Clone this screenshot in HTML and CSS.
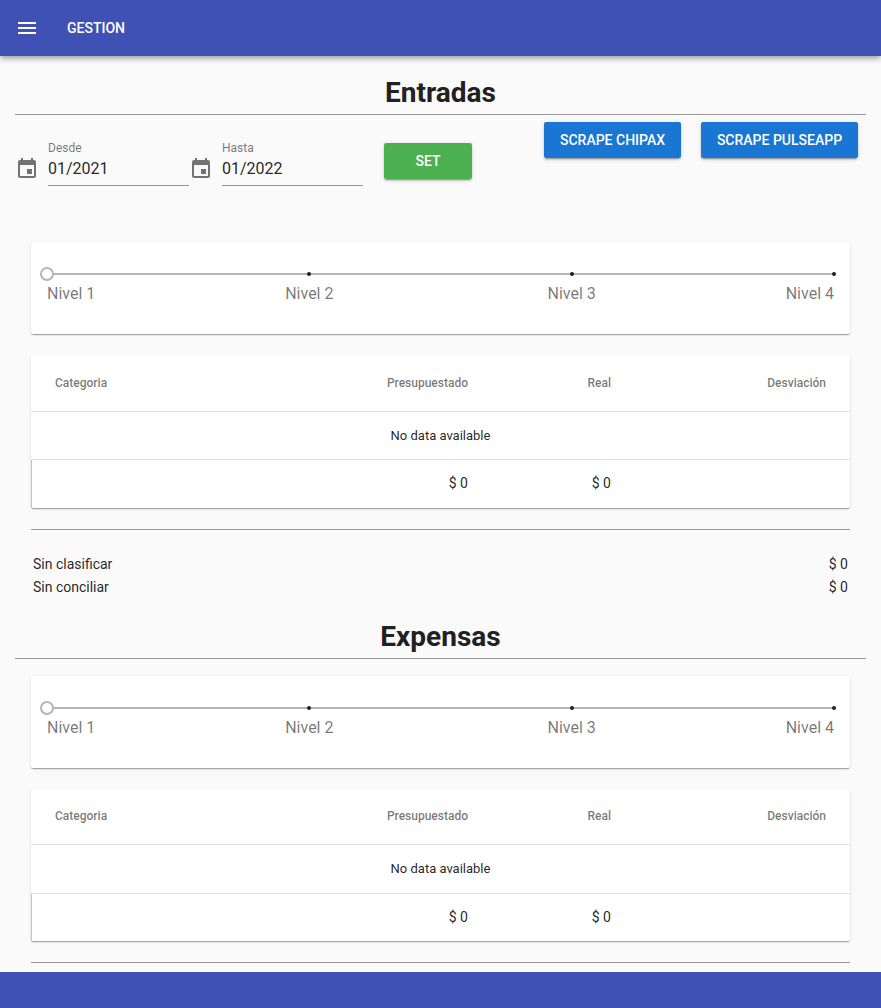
FILE: index.html
```html
<!DOCTYPE html>
<html lang="es">
<head>
    <meta charset="UTF-8">
    <meta name="viewport" content="width=device-width, initial-scale=1.0">
    <title>Gestion</title>
    <link rel="stylesheet" href="styles.css">
</head>
<body>
    <header class="toolbar">
        <svg class="menu-icon" viewBox="0 0 24 24"><path d="M3,6H21V8H3V6M3,11H21V13H3V11M3,16H21V18H3V16Z"/></svg>
        <div class="toolbar-title">GESTION</div>
    </header>
    <main class="page">
        <h2 class="title">Entradas</h2>
        <div class="filters">
            <svg class="date-icon" viewBox="0 0 24 24"><path d="M17,12h-5v5h5V12z M16,1v2H8V1H6v2H5C3.89,3 3.01,3.9 3.01,5L3,19c0,1.1 0.89,2 2,2h14c1.1,0 2-0.9 2-2V5c0-1.1-0.9-2-2-2h-1V1H16z M19,19H5V8h14V19z"/></svg>
            <div class="field">
                <label>Desde</label>
                <div class="field-value">01/2021</div>
            </div>
            <svg class="date-icon" viewBox="0 0 24 24"><path d="M17,12h-5v5h5V12z M16,1v2H8V1H6v2H5C3.89,3 3.01,3.9 3.01,5L3,19c0,1.1 0.89,2 2,2h14c1.1,0 2-0.9 2-2V5c0-1.1-0.9-2-2-2h-1V1H16z M19,19H5V8h14V19z"/></svg>
            <div class="field">
                <label>Hasta</label>
                <div class="field-value">01/2022</div>
            </div>
            <button class="btn btn-set">SET</button>
            <div class="scrape">
                <button class="btn btn-scrape">SCRAPE CHIPAX</button>
                <button class="btn btn-scrape">SCRAPE PULSEAPP</button>
            </div>
        </div>

        <div class="content">
            <div class="card slider">
                <div class="track">
                    <span class="thumb"></span>
                    <span class="tick"></span>
                    <span class="tick"></span>
                    <span class="tick"></span>
                </div>
                <div class="levels">
                    <span class="level-first">Nivel 1</span>
                    <span class="level-mid">Nivel 2</span>
                    <span class="level-mid">Nivel 3</span>
                    <span class="level-last">Nivel 4</span>
                </div>
            </div>
            <div class="card">
                <table class="table">
                    <colgroup><col class="col-a"><col class="col-b"><col class="col-c"><col class="col-d"></colgroup>
                    <thead>
                        <tr><th class="left">Categoria</th><th>Presupuestado</th><th>Real</th><th>Desviación</th></tr>
                    </thead>
                    <tbody>
                        <tr class="empty"><td colspan="4">No data available</td></tr>
                    </tbody>
                    <tfoot>
                        <tr><td></td><td>$ 0</td><td>$ 0</td><td></td></tr>
                    </tfoot>
                </table>
            </div>
            <hr class="line">
            <div class="totals">
                <div class="total-row"><span>Sin clasificar</span><span>$ 0</span></div>
                <div class="total-row"><span>Sin conciliar</span><span>$ 0</span></div>
            </div>
        </div>

        <h2 class="title title-second">Expensas</h2>
        <div class="content content-second">
            <div class="card slider">
                <div class="track">
                    <span class="thumb"></span>
                    <span class="tick"></span>
                    <span class="tick"></span>
                    <span class="tick"></span>
                </div>
                <div class="levels">
                    <span class="level-first">Nivel 1</span>
                    <span class="level-mid">Nivel 2</span>
                    <span class="level-mid">Nivel 3</span>
                    <span class="level-last">Nivel 4</span>
                </div>
            </div>
            <div class="card">
                <table class="table table-second">
                    <colgroup><col class="col-a"><col class="col-b"><col class="col-c"><col class="col-d"></colgroup>
                    <thead>
                        <tr><th class="left">Categoria</th><th>Presupuestado</th><th>Real</th><th>Desviación</th></tr>
                    </thead>
                    <tbody>
                        <tr class="empty"><td colspan="4">No data available</td></tr>
                    </tbody>
                    <tfoot>
                        <tr><td></td><td>$ 0</td><td>$ 0</td><td></td></tr>
                    </tfoot>
                </table>
            </div>
            <hr class="line">
        </div>
    </main>
    <footer class="footer"></footer>
</body>
</html>
```

FILE: styles.css
```css
*{
    margin: 0;
    padding: 0;
    box-sizing: border-box;
}
html, body{
    height: 100%;
}
body{
    display: flex;
    flex-direction: column;
    overflow: hidden;
    background-color: #fafafa;
    color: rgba(0,0,0,0.87);
    font-family: Roboto, "Liberation Sans", sans-serif;
}
.toolbar{
    height: 56px;
    flex: none;
    display: flex;
    align-items: center;
    padding-left: 15px;
    background-color: #3f51b5;
    color: #fff;
    position: relative;
    z-index: 2;
    box-shadow: 0 2px 4px -1px rgba(0,0,0,0.2), 0 4px 5px 0 rgba(0,0,0,0.14), 0 1px 10px 0 rgba(0,0,0,0.12);
}
.menu-icon{
    width: 24px;
    height: 24px;
    fill: #fff;
}
.toolbar-title{
    margin-left: 28px;
    font-size: 14px;
    font-weight: 465;
}
.page{
    flex: 1;
    min-height: 0;
    overflow: hidden;
    padding: 0 15px;
}
.title{
    height: 59px;
    padding-top: 17px;
    line-height: 40px;
    border-bottom: 1px solid #999;
    text-align: center;
    font-size: 28px;
    font-weight: 700;
    color: #212121;
}
.title-second{
    height: 46px;
    padding-top: 4px;
}
.filters{
    display: flex;
    align-items: flex-start;
    height: 127px;
}
.date-icon{
    width: 24px;
    height: 24px;
    flex: none;
    margin-top: 42px;
    margin-right: 9px;
    fill: rgba(0,0,0,0.54);
}
.field{
    width: 141px;
    height: 46px;
    flex: none;
    margin-top: 25px;
    border-bottom: 1px solid #949494;
}
.field label{
    display: block;
    height: 15px;
    padding-top: 1px;
    line-height: 14px;
    font-size: 12px;
    color: rgba(0,0,0,0.54);
}
.field-value{
    height: 29px;
    line-height: 28px;
    font-size: 16px;
}
.btn{
    height: 36px;
    border: none;
    border-radius: 2px;
    color: #fff;
    font-family: inherit;
    font-size: 14px;
    font-weight: 465;
    box-shadow: 0 3px 1px -2px rgba(0,0,0,0.2), 0 2px 2px 0 rgba(0,0,0,0.14), 0 1px 5px 0 rgba(0,0,0,0.12);
}
.btn-set{
    width: 88px;
    margin-top: 28px;
    margin-left: 21px;
    background-color: #4caf50;
}
.scrape{
    display: flex;
    gap: 20px;
    margin-top: 7px;
    margin-left: auto;
    margin-right: 8px;
}
.btn-scrape{
    width: 137px;
    background-color: #1976d2;
}
.btn-scrape:last-child{
    width: 157px;
}
.content{
    padding: 0 16px;
}
.content-second{
    padding-top: 17px;
}
.card{
    background-color: #fff;
    border-radius: 2px;
    box-shadow: 0 2px 1px -1px rgba(0,0,0,0.2), 0 1px 1px 0 rgba(0,0,0,0.14), 0 1px 3px 0 rgba(0,0,0,0.12);
    margin-bottom: 21px;
}
.slider{
    height: 92px;
    padding: 31px 16px 0;
}
.track{
    display: flex;
    justify-content: space-between;
    align-items: center;
    position: relative;
    height: 2px;
    background-color: #b5b5b5;
}
.thumb{
    width: 14px;
    height: 14px;
    margin-left: -7px;
    margin-right: -5px;
    border: 2px solid #b5b5b5;
    border-radius: 50%;
    background-color: #fff;
}
.tick{
    width: 4px;
    height: 4px;
    border-radius: 50%;
    background-color: #212121;
}
.tick:last-child{
    margin-right: -2px;
}
.levels{
    display: grid;
    grid-template-columns: repeat(6, 1fr);
    margin-top: 9px;
    line-height: 20px;
    font-size: 16px;
    color: rgba(0,0,0,0.54);
}
.level-first{
    grid-column: 1;
}
.level-mid{
    grid-column: span 2;
    text-align: center;
}
.level-last{
    grid-column: 6;
    text-align: right;
}
.table{
    width: 100%;
    table-layout: fixed;
    border-collapse: collapse;
    font-size: 13px;
}
.col-a{
    width: 231px;
}
.col-b{
    width: 230px;
}
.col-c{
    width: 143px;
}
.table th, .table td{
    padding: 0 24px;
    text-align: right;
}
.table th{
    height: 56px;
    font-size: 12px;
    font-weight: 500;
    color: rgba(0,0,0,0.54);
}
.table .left{
    text-align: left;
}
.table .empty td{
    height: 48px;
    padding: 0;
    text-align: center;
    border-top: 1px solid #e0e0e0;
    border-bottom: 1px solid #e0e0e0;
}
.table tfoot td{
    height: 49px;
    padding-bottom: 2px;
    font-size: 14px;
}
.table tfoot td:first-child{
    box-shadow: inset 1px 0 0 #c4c4c4;
}
.table-second th{
    height: 55px;
}
.table-second .empty td{
    height: 49px;
}
.table-second tfoot td{
    height: 48px;
    padding-bottom: 0;
}
.line{
    border: none;
    border-top: 1px solid #999;
}
.totals{
    padding: 23px 2px 0;
    font-size: 14px;
    line-height: 23px;
    height: 83px;
}
.total-row{
    display: flex;
    justify-content: space-between;
}
.footer{
    height: 36px;
    flex: none;
    background-color: #3f51b5;
}
```
